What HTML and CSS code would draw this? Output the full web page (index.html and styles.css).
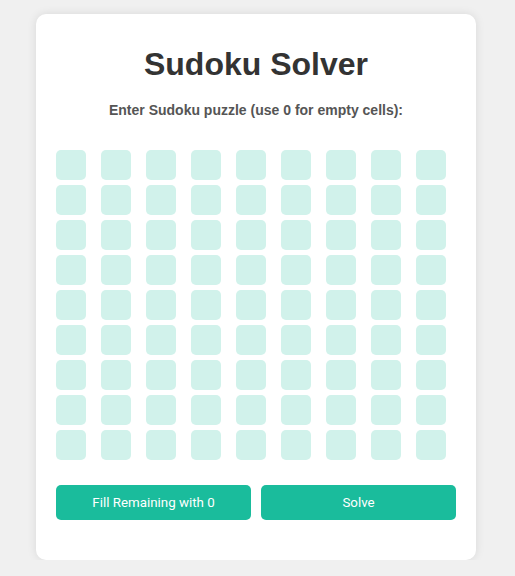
FILE: index.html
```html
<!DOCTYPE html>
<html>
<head>
<meta charset="utf-8">
<title>Sudoku Solver</title>
<link rel="stylesheet" href="styles.css">
</head>
<body>
<div class="card">
  <h1 class="title">Sudoku Solver</h1>
  <p class="label">Enter Sudoku puzzle (use 0 for empty cells):</p>
  <div class="grid" id="grid">
    <input class="cell" maxlength="1"><input class="cell" maxlength="1"><input class="cell" maxlength="1"><input class="cell" maxlength="1"><input class="cell" maxlength="1"><input class="cell" maxlength="1"><input class="cell" maxlength="1"><input class="cell" maxlength="1"><input class="cell" maxlength="1">
    <input class="cell" maxlength="1"><input class="cell" maxlength="1"><input class="cell" maxlength="1"><input class="cell" maxlength="1"><input class="cell" maxlength="1"><input class="cell" maxlength="1"><input class="cell" maxlength="1"><input class="cell" maxlength="1"><input class="cell" maxlength="1">
    <input class="cell" maxlength="1"><input class="cell" maxlength="1"><input class="cell" maxlength="1"><input class="cell" maxlength="1"><input class="cell" maxlength="1"><input class="cell" maxlength="1"><input class="cell" maxlength="1"><input class="cell" maxlength="1"><input class="cell" maxlength="1">
    <input class="cell" maxlength="1"><input class="cell" maxlength="1"><input class="cell" maxlength="1"><input class="cell" maxlength="1"><input class="cell" maxlength="1"><input class="cell" maxlength="1"><input class="cell" maxlength="1"><input class="cell" maxlength="1"><input class="cell" maxlength="1">
    <input class="cell" maxlength="1"><input class="cell" maxlength="1"><input class="cell" maxlength="1"><input class="cell" maxlength="1"><input class="cell" maxlength="1"><input class="cell" maxlength="1"><input class="cell" maxlength="1"><input class="cell" maxlength="1"><input class="cell" maxlength="1">
    <input class="cell" maxlength="1"><input class="cell" maxlength="1"><input class="cell" maxlength="1"><input class="cell" maxlength="1"><input class="cell" maxlength="1"><input class="cell" maxlength="1"><input class="cell" maxlength="1"><input class="cell" maxlength="1"><input class="cell" maxlength="1">
    <input class="cell" maxlength="1"><input class="cell" maxlength="1"><input class="cell" maxlength="1"><input class="cell" maxlength="1"><input class="cell" maxlength="1"><input class="cell" maxlength="1"><input class="cell" maxlength="1"><input class="cell" maxlength="1"><input class="cell" maxlength="1">
    <input class="cell" maxlength="1"><input class="cell" maxlength="1"><input class="cell" maxlength="1"><input class="cell" maxlength="1"><input class="cell" maxlength="1"><input class="cell" maxlength="1"><input class="cell" maxlength="1"><input class="cell" maxlength="1"><input class="cell" maxlength="1">
    <input class="cell" maxlength="1"><input class="cell" maxlength="1"><input class="cell" maxlength="1"><input class="cell" maxlength="1"><input class="cell" maxlength="1"><input class="cell" maxlength="1"><input class="cell" maxlength="1"><input class="cell" maxlength="1"><input class="cell" maxlength="1">
  </div>
  <div class="actions">
    <button class="btn">Fill Remaining with 0</button>
    <button class="btn">Solve</button>
  </div>
</div>
</body>
</html>
```
FILE: styles.css
```css
html, body {
  margin: 0;
  padding: 0;
}
body {
  background: #f0f0f0;
  font-family: "Liberation Sans", Arial, sans-serif;
  padding-top: 14px;
  padding-left: 36px;
}
.card {
  width: 400px;
  height: 506px;
  padding: 20px;
  background: #ffffff;
  border-radius: 10px;
  box-shadow: 0 0 10px rgba(0, 0, 0, 0.1);
  display: flex;
  flex-direction: column;
}
.title {
  margin: 12px 0 0;
  font-size: 32px;
  font-weight: bold;
  color: #333333;
  text-align: center;
  line-height: 37px;
}
.label {
  margin: 19px 0 0;
  font-size: 14px;
  font-weight: bold;
  color: #555555;
  text-align: center;
  line-height: 17px;
}
.grid {
  margin-top: 31px;
  display: grid;
  grid-template-columns: repeat(9, 1fr);
  row-gap: 5px;
  column-gap: 5px;
}
.cell {
  box-sizing: border-box;
  width: 30px;
  height: 30px;
  border: none;
  border-radius: 5px;
  background: #d1f2eb;
  padding: 0;
  margin: 0;
  text-align: center;
  font-size: 14px;
  outline: none;
}
.actions {
  margin-top: 25px;
  display: flex;
  gap: 10px;
}
.btn {
  flex: 1;
  height: 35px;
  border: none;
  border-radius: 5px;
  background: #1abc9c;
  color: #ffffff;
  font-family: Roboto, "Liberation Sans", sans-serif;
  font-size: 13.333px;
  padding: 0;
  cursor: pointer;
}
```
